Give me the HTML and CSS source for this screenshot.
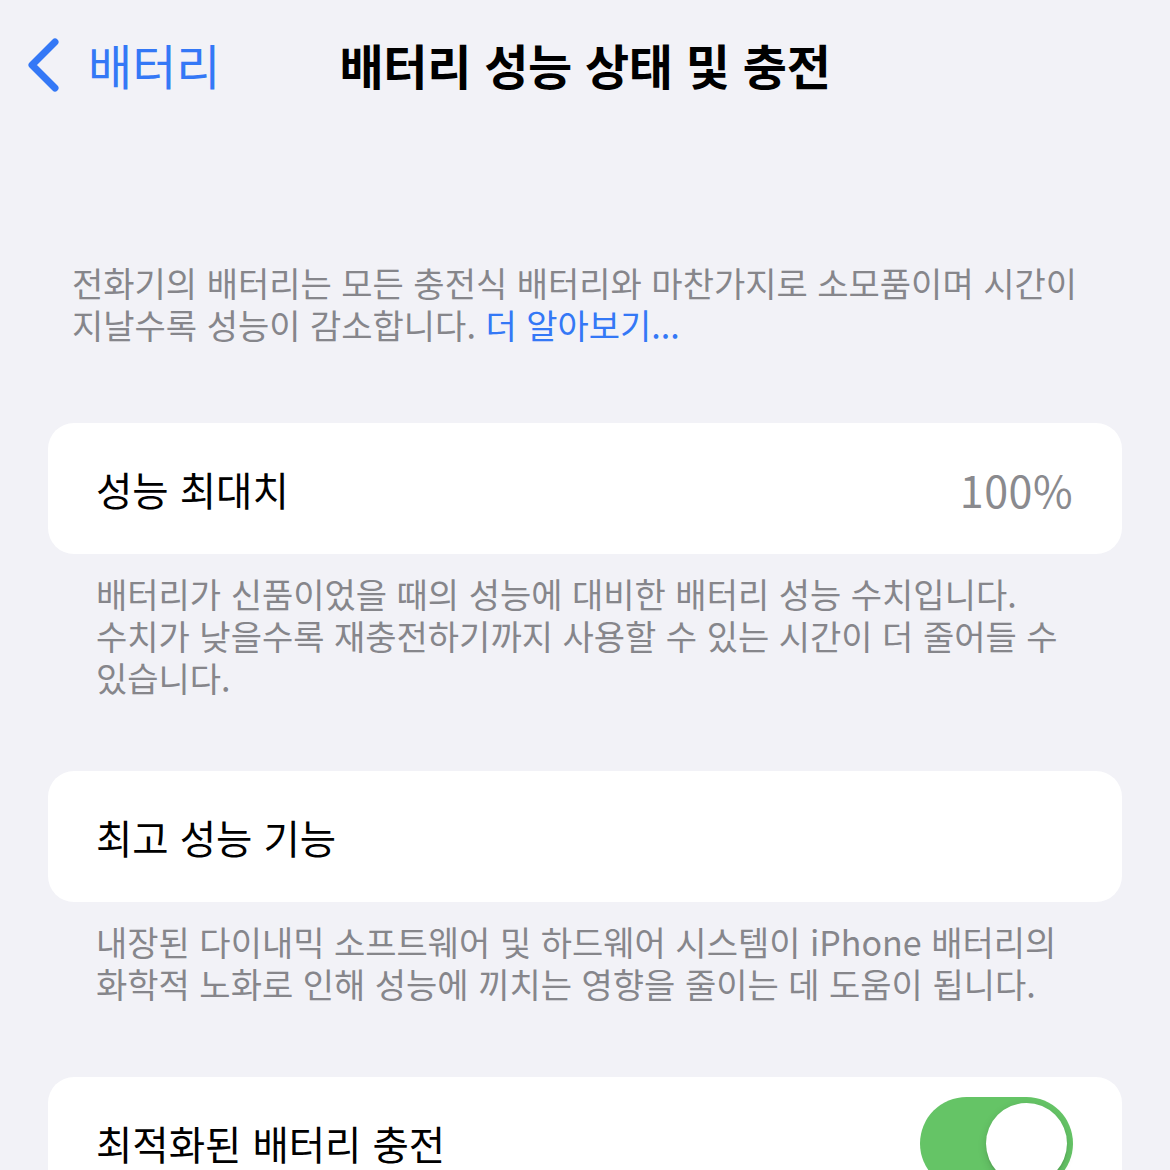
FILE: index.html
```html
<!DOCTYPE html>
<html lang="ko">
<head>
<meta charset="utf-8">
<title>배터리 성능 상태 및 충전</title>
<link rel="stylesheet" href="styles.css">
</head>
<body>
<header class="nav">
  <a class="back">
    <svg class="chev" viewBox="0 0 34 56" width="34" height="56" aria-hidden="true">
      <polyline points="29,5 6,28 29,51" fill="none" stroke="#3478f6" stroke-width="7" stroke-linecap="round" stroke-linejoin="round"/>
    </svg>
    <span class="back-label">배터리</span>
  </a>
  <h1 class="title">배터리 성능 상태 및 충전</h1>
  <span></span>
</header>

<p class="intro">전화기의 배터리는 모든 충전식 배터리와 마찬가지로 소모품이며 시간이 지날수록 성능이 감소합니다. <span class="link">더 알아보기...</span></p>

<section class="group">
  <div class="card">
    <span class="label">성능 최대치</span>
    <span class="value">100%</span>
  </div>
  <p class="footer">배터리가 신품이었을 때의 성능에 대비한 배터리 성능 수치입니다. 수치가 낮을수록 재충전하기까지 사용할 수 있는 시간이 더 줄어들 수 있습니다.</p>
</section>

<section class="group">
  <div class="card">
    <span class="label">최고 성능 기능</span>
  </div>
  <p class="footer">내장된 다이내믹 소프트웨어 및 하드웨어 시스템이 iPhone 배터리의 화학적 노화로 인해 성능에 끼치는 영향을 줄이는 데 도움이 됩니다.</p>
</section>

<section class="group">
  <div class="card">
    <span class="label">최적화된 배터리 충전</span>
    <span class="toggle"><span class="knob"></span></span>
  </div>
</section>
</body>
</html>
```

FILE: styles.css
```css
* { box-sizing: border-box; }
html, body {
  margin: 0;
  padding: 0;
  background: #f2f2f7;
  font-family: "Noto Sans CJK KR", "Noto Sans", sans-serif;
  color: #000;
  word-break: keep-all;
}
body { overflow: hidden; height: 1170px; }

.nav {
  display: grid;
  grid-template-columns: 1fr auto 1fr;
  align-items: center;
  height: 60px;
  margin-top: 34px;
}
.back {
  display: flex;
  align-items: center;
  padding-left: 26px;
  color: #3478f6;
}
.chev { display: block; margin-top: 1px; }
.back-label {
  font-size: 48px;
  margin-left: 28px;
  line-height: 60px;
}
.title {
  margin: 0;
  font-size: 48px;
  font-weight: 700;
  line-height: 60px;
  letter-spacing: -0.3px;
}

.intro {
  margin: 168px 0 0;
  padding: 0 60px 0 72px;
  font-size: 34px;
  line-height: 42px;
  color: #86868b;
}
.link { color: #3478f6; }

.group { margin-top: 77px; }
.group + .group { margin-top: 72px; }

.card {
  margin: 0 48px;
  height: 131px;
  background: #fff;
  border-radius: 26px;
  padding: 0 48px;
  display: flex;
  align-items: center;
  justify-content: space-between;
}
.label {
  font-size: 39.5px;
  line-height: 46px;
}
.value {
  font-size: 43px;
  line-height: 46px;
  color: #8a8a8e;
  margin-right: 1px;
  letter-spacing: 0.5px;
}
.footer {
  margin: 0;
  padding: 19px 96px 0 96px;
  font-size: 34px;
  line-height: 42px;
  color: #86868b;
}

.toggle {
  position: relative;
  width: 153px;
  height: 93px;
  border-radius: 47px;
  background: #65c466;
  flex: none;
  margin-right: 1px;
  margin-top: 2px;
}
.knob {
  position: absolute;
  top: 6px;
  right: 6px;
  width: 81px;
  height: 81px;
  border-radius: 50%;
  background: #fff;
  box-shadow: 0 3px 8px rgba(0,0,0,0.15), 0 3px 1px rgba(0,0,0,0.06);
}
```
